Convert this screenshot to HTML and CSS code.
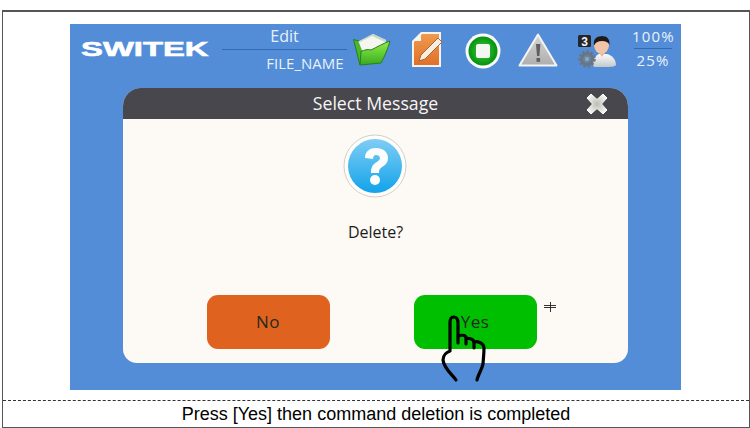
FILE: index.html
```html
<!DOCTYPE html>
<html lang="en">
<head>
<meta charset="utf-8">
<title>Select Message</title>
<link rel="stylesheet" href="styles.css">
</head>
<body>
<main class="frame">
  <section class="shot">
    <div class="stage">
      <header class="topbar">
        <div class="logo"><span class="logo-text">SWITEK</span></div>
        <div class="title">
          <div class="title-top">Edit</div>
          <div class="title-bottom">FILE_NAME</div>
        </div>
        <svg class="icon folder" viewBox="0 0 38 33" width="38" height="33">
          <defs>
            <linearGradient id="fg" x1="0" y1="0" x2="0" y2="1"><stop offset="0" stop-color="#9be650"/><stop offset=".5" stop-color="#62cf34"/><stop offset="1" stop-color="#3aa822"/></linearGradient>
          </defs>
          <path d="M0.500 6.500 L6 8 L12 22 L7 32 Z" fill="#4cb62c" stroke="#24801a" stroke-width="1" stroke-linejoin="round"/>
          <path d="M5.500 8.500 L20 1 L33 7 L32 12 L17 18 L10 20 Z" fill="#f6f6f0"/>
          <path d="M20 1 L33 7 L32 9 L19 3 L7 9 L5.500 8.500 Z" fill="#c9d8c0"/>
          <path d="M8 18.500 C11 17 15 16 18 17 C24 14 31 10 37 8 C35 15 32 23 28 30 L7 32 Z" fill="url(#fg)" stroke="#24801a" stroke-width="1" stroke-linejoin="round"/>
        </svg>
        <svg class="icon doc" viewBox="0 0 30 36" width="30" height="36">
          <defs>
            <linearGradient id="dg" x1="0" y1="0" x2="0" y2="1"><stop offset="0" stop-color="#ef9a4f"/><stop offset="1" stop-color="#e0702a"/></linearGradient>
          </defs>
          <path d="M9 0 H29 V35 H0 V9 Z" fill="#f6f3ec"/>
          <path d="M10 2 H27 V33 H2 V10 Z" fill="url(#dg)"/>
          <path d="M9 1 V9 H1 Z" fill="#f7f5ef"/>
          <path d="M26 6 L30 10 L13 27 L7 29 L9 23 Z" fill="#f7efe2" stroke="#b5622f" stroke-width="1"/>
        </svg>
        <svg class="icon stop" viewBox="0 0 36 36" width="36" height="36">
          <defs>
            <radialGradient id="sg" cx=".5" cy=".5" r=".55"><stop offset="0" stop-color="#3fd03f"/><stop offset="1" stop-color="#008a0a"/></radialGradient>
          </defs>
          <circle cx="18" cy="18" r="17.5" fill="#f8fbf8"/>
          <circle cx="18" cy="18" r="14.500" fill="url(#sg)"/>
          <rect x="11" y="11" width="14" height="14" rx="2" fill="#f2f7f2"/>
        </svg>
        <svg class="icon warn" viewBox="0 0 40 34" width="40" height="34">
          <defs>
            <linearGradient id="wg" x1="0" y1="0" x2="0" y2="1"><stop offset="0" stop-color="#d5d5d5"/><stop offset="1" stop-color="#aeaeae"/></linearGradient>
          </defs>
          <path d="M20 1.500 L38.500 32.500 H1.500 Z" fill="url(#wg)" stroke="#f4f4f4" stroke-width="2" stroke-linejoin="round"/>
          <path d="M18 11 H22.400 L21.400 23 H19 Z" fill="#5f5f5f"/>
          <rect x="18.500" y="25" width="3.600" height="3.800" fill="#5f5f5f"/>
        </svg>
        <svg class="icon user" viewBox="0 0 40 36" width="40" height="36">
          <defs>
            <linearGradient id="ug" x1="0" y1="0" x2="0" y2="1"><stop offset="0" stop-color="#fbfbfb"/><stop offset="1" stop-color="#c4c8cc"/></linearGradient>
          </defs>
          <path d="M16 33 C16 26 19 22 22 21 L30 21 C35 22 39 27 39 32 C39 33 35 34 30 34 H18 Z" fill="url(#ug)"/>
          <path d="M21 18 L25 24 L29 18 L28 15 H22 Z" fill="#e8b79a"/>
          <ellipse cx="24.500" cy="12" rx="7.500" ry="9" fill="#f2c4a8"/>
          <path d="M17 12 C16 6 20 3 25 3 C30 3 33 6 32.500 12 C31 9 29 8 25 8 C21 8 19 9 17.500 12 Z" fill="#1f1a18"/>
          <rect x="1" y="2" width="13" height="12" rx="1.500" fill="#26262a"/>
          <text class="badge" x="7.500" y="12.500" text-anchor="middle">3</text>
          <circle cx="10" cy="26" r="5.500" fill="#5d86a8" stroke="#6c747e" stroke-width="3"/>
          <circle cx="10" cy="26" r="7.800" fill="none" stroke="#6c747e" stroke-width="1.800" stroke-dasharray="2.500 2"/>
          <circle cx="10" cy="26" r="2.200" fill="#8aa4b8"/>
        </svg>
        <div class="speed">
          <div class="speed-top">100%</div>
          <div class="speed-bottom">25%</div>
        </div>
      </header>

      <div class="dialog">
        <div class="dialog-head">
          <span class="dialog-title">Select Message</span>
          <svg class="close" viewBox="0 0 22 22" width="22" height="22">
            <defs>
              <radialGradient id="cg" cx=".5" cy=".5" r=".6"><stop offset="0" stop-color="#bdbdb5"/><stop offset="1" stop-color="#fbfbf8"/></radialGradient>
            </defs>
            <path d="M5 1 L11 6.500 L17 1 L21 5 L15.500 11 L21 17 L17 21 L11 15.500 L5 21 L1 17 L6.500 11 L1 5 Z" fill="url(#cg)" stroke="#fbfbf8" stroke-linejoin="round"/>
          </svg>
        </div>
        <div class="dialog-body">
          <svg class="question" viewBox="0 0 64 64" width="64" height="64">
            <defs>
              <linearGradient id="qg" x1="0" y1="0" x2="0" y2="1"><stop offset="0" stop-color="#7fcdf5"/><stop offset="1" stop-color="#12a3ea"/></linearGradient>
            </defs>
            <circle cx="32" cy="32" r="31" fill="#fdfdfb" stroke="#cfcfca" stroke-width="1"/>
            <circle cx="32" cy="32" r="27" fill="url(#qg)"/>
            <path d="M22 24 C22 17 27 14 33 14 C40 14 45 18 45 24 C45 29 42 31 38.500 33.500 C36.500 35 36 36 36 39 H28 C28 34 29 31 33 28.500 C36 26.500 37 25.500 37 24 C37 22 35 21 33 21 C31 21 30 22.500 30 25 Z" fill="#fbfdfe"/>
            <circle cx="32" cy="46" r="5" fill="#fbfdfe"/>
          </svg>
          <p class="message">Delete?</p>
          <div class="actions">
            <button class="btn btn-no" type="button">No</button>
            <button class="btn btn-yes" type="button">Yes</button>
          </div>
        </div>
      </div>

      <svg class="hand" viewBox="0 0 50 70" width="50" height="70">
        <path d="M17 65 C14 60 5 54 4 45 C4 40 8 37 11 36 V8 C11 3 13 2 14.500 2 C17 2 19 4 19 8 V28 M19 22 C19 20 27 19 27 23 V29 M27 24 C28 23 35 23 35 28 V33 M35 28 C37 25 45 28 45 33 C45 40 44 47 44 49 C43 54 39 60 38 65" fill="none" stroke="#000" stroke-width="3.200" stroke-linecap="round" stroke-linejoin="round"/>
      </svg>
    </div>
    <svg class="mark" viewBox="0 0 12 12" width="12" height="12">
      <path d="M0 3.500 H12 M0 5.500 H12 M6.500 0 V10" fill="none" stroke="#333" stroke-width="1"/>
    </svg>
  </section>
  <footer class="caption">Press [Yes] then command deletion is completed</footer>
</main>
</body>
</html>
```
FILE: styles.css
```css
* {
  box-sizing: border-box;
}

html,
body {
  margin: 0;
  padding: 0;
  background: #fff;
}

body {
  width: 750px;
  height: 428px;
  overflow: hidden;
  padding: 10px 0 0 2px;
}

.frame {
  width: 748px;
  height: 418px;
  border: 1px solid #555;
  border-top-width: 2px;
  display: flex;
  flex-direction: column;
  font-family: "Open Sans", "Noto Sans", sans-serif;
}

.shot {
  position: relative;
  height: 390px;
  padding: 12px 0 0 67px;
  border-bottom: 1px dashed #333;
}

.stage {
  position: relative;
  width: 611px;
  height: 366px;
  background: #538dd8;
}

.topbar {
  height: 64px;
  display: flex;
  align-items: flex-start;
  padding: 9px 0 0 11px;
  color: #e9f1f8;
}

.logo {
  width: 128px;
  height: 14px;
  margin-top: 9px;
  overflow: visible;
}

.logo-text {
  display: block;
  width: 76px;
  font: 900 20px/14px "Liberation Sans", sans-serif;
  color: #fff;
  -webkit-text-stroke: 0.6px #fff;
  transform: scaleX(1.64);
  transform-origin: left center;
  white-space: nowrap;
}

.title {
  width: 125px;
  margin: -9px 0 0 13px;
  text-align: center;
}

.title-top {
  height: 26px;
  line-height: 24px;
  font-size: 16px;
  border-bottom: 1px solid #2f6cb2;
}

.title-bottom {
  line-height: 26px;
  padding-left: 41px;
  font-size: 15px;
  white-space: nowrap;
}

.icon {
  display: block;
  flex: none;
}

.folder {
  margin-left: 6px;
}

.doc {
  margin: -1px 0 0 21px;
}

.stop {
  margin-left: 23px;
}

.warn {
  margin-left: 17px;
}

.user {
  margin-left: 19px;
}

.speed {
  width: 38px;
  margin: -9px 0 0 17px;
  display: flex;
  flex-direction: column;
  align-items: center;
  font-size: 15px;
  letter-spacing: 1.2px;
  white-space: nowrap;
}

.speed-top {
  width: 38px;
  height: 25px;
  line-height: 24px;
  text-align: center;
  text-indent: -2px;
  border-bottom: 1px solid #2f6cb2;
}

.speed-bottom {
  line-height: 23px;
}

.badge {
  font: 700 12px "Liberation Sans", sans-serif;
  fill: #f4f4f4;
}

.dialog {
  width: 505px;
  height: 275px;
  margin-left: 53px;
  border-radius: 18px 18px 14px 14px;
  background: #fdfaf5;
  overflow: hidden;
}

.dialog-head {
  height: 31px;
  position: relative;
  background: #48474e;
  color: #f6f6f4;
  text-align: center;
  font-size: 17.7px;
  line-height: 31px;
}

.dialog-title {
  display: block;
}

.close {
  position: absolute;
  top: 5px;
  right: 20px;
}

.dialog-body {
  display: flex;
  flex-direction: column;
  align-items: center;
  padding-top: 15px;
}

.question {
  display: block;
  margin-right: 2px;
}

.message {
  margin: 22px 0 0;
  height: 24px;
  line-height: 24px;
  font-size: 16px;
  color: #1c1c1c;
}

.actions {
  display: flex;
  gap: 84px;
  margin-top: 51px;
  margin-right: 8px;
}

.btn {
  width: 123px;
  height: 54px;
  border: 0;
  border-radius: 11px;
  font-family: inherit;
  font-size: 17px;
  letter-spacing: 0.5px;
  color: #1f2a1c;
  padding: 0 0 2px;
}

.btn-no {
  background: #e0621f;
}

.btn-yes {
  background: #00bf00;
}

.hand {
  position: absolute;
  left: 369px;
  top: 291px;
}

.mark {
  position: absolute;
  left: 541px;
  top: 290px;
}

.caption {
  flex: 1;
  text-align: center;
  font: 18px/26px "Liberation Sans", Arial, sans-serif;
  color: #000;
}
```
